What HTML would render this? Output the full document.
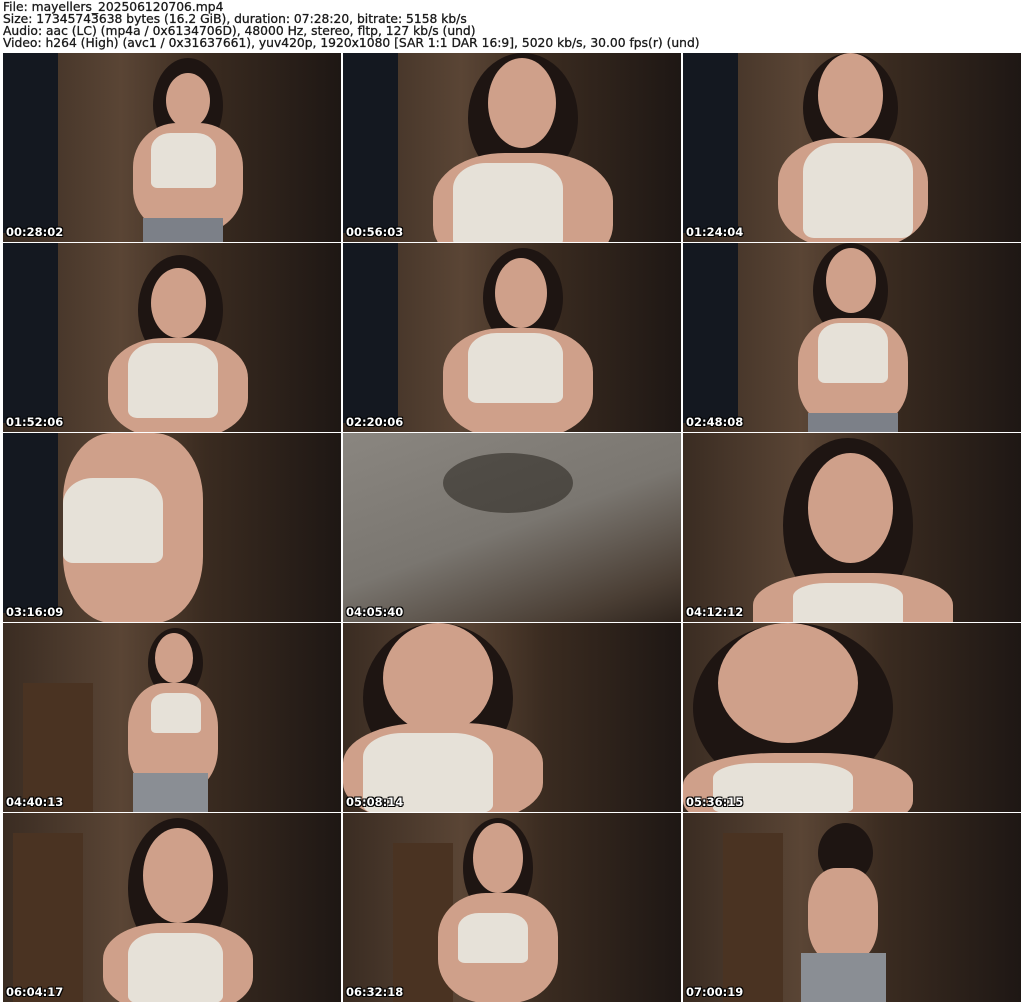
<!DOCTYPE html>
<html><head><meta charset="utf-8"><style>
*{margin:0;padding:0;box-sizing:border-box}
body{width:1024px;height:1003px;background:#fff;position:relative;overflow:hidden;font-family:"DejaVu Sans","Liberation Sans",sans-serif}
.hd{position:absolute;left:3px;top:1px;font-size:12.3px;line-height:12px;color:#1a1a1a;white-space:nowrap;-webkit-text-stroke:0.3px #1a1a1a}
.c{position:absolute;width:338px;height:189px;overflow:hidden;background:#2a211b}
.c div{position:absolute}
.t{left:3px;bottom:3px;color:#fff;font-weight:bold;font-size:11.5px;text-shadow:1px 1px 0 #000,-1px -1px 0 #000,1px -1px 0 #000,-1px 1px 0 #000;font-family:"DejaVu Sans",sans-serif}
.wall{left:0;top:0;width:100%;height:100%;background:linear-gradient(90deg,#3a2c22 0%,#5a4535 35%,#3a2b20 60%,#1e1714 100%)}
.lp{left:0;top:0;width:55px;height:180px;background:#141820}
.hair{border-radius:50%;background:#1e1512}
.skin{border-radius:50%;background:#cfa08a}
.top{background:#e6e1d8;border-radius:30% 30% 10% 10%}
</style></head><body>
<div class="hd">File: mayellers_202506120706.mp4<br>Size: 17345743638 bytes (16.2 GiB), duration: 07:28:20, bitrate: 5158 kb/s<br>Audio: aac (LC) (mp4a / 0x6134706D), 48000 Hz, stereo, fltp, 127 kb/s (und)<br>Video: h264 (High) (avc1 / 0x31637661), yuv420p, 1920x1080 [SAR 1:1 DAR 16:9], 5020 kb/s, 30.00 fps(r) (und)</div>

<div class="c" style="left:3px;top:53px"><div class="wall"></div><div class="lp"></div><div class="hair" style="left:150px;top:5px;width:70px;height:95px"></div><div class="skin" style="left:163px;top:20px;width:44px;height:55px"></div><div class="skin" style="left:130px;top:70px;width:110px;height:110px;border-radius:40%"></div><div class="top" style="left:148px;top:80px;width:65px;height:55px"></div><div style="left:140px;top:165px;width:80px;height:30px;background:#7c8088"></div><div class="t">00:28:02</div></div>
<div class="c" style="left:343px;top:53px"><div class="wall"></div><div class="lp"></div><div class="hair" style="left:125px;top:0;width:110px;height:130px"></div><div class="skin" style="left:145px;top:5px;width:68px;height:90px"></div><div class="skin" style="left:90px;top:100px;width:180px;height:120px;border-radius:40%"></div><div class="top" style="left:110px;top:110px;width:110px;height:85px"></div><div class="t">00:56:03</div></div>
<div class="c" style="left:683px;top:53px"><div class="wall"></div><div class="lp"></div><div class="hair" style="left:120px;top:0;width:95px;height:110px"></div><div class="skin" style="left:135px;top:0;width:65px;height:85px"></div><div class="skin" style="left:95px;top:85px;width:150px;height:110px;border-radius:40%"></div><div class="top" style="left:120px;top:90px;width:110px;height:95px"></div><div class="t">01:24:04</div></div>

<div class="c" style="left:3px;top:243px"><div class="wall"></div><div class="lp"></div><div class="hair" style="left:135px;top:12px;width:85px;height:110px"></div><div class="skin" style="left:148px;top:25px;width:55px;height:70px"></div><div class="skin" style="left:105px;top:95px;width:140px;height:100px;border-radius:40%"></div><div class="top" style="left:125px;top:100px;width:90px;height:75px"></div><div class="t">01:52:06</div></div>
<div class="c" style="left:343px;top:243px"><div class="wall"></div><div class="lp"></div><div class="hair" style="left:140px;top:5px;width:80px;height:100px"></div><div class="skin" style="left:152px;top:15px;width:52px;height:70px"></div><div class="skin" style="left:100px;top:85px;width:150px;height:110px;border-radius:40%"></div><div class="top" style="left:125px;top:90px;width:95px;height:70px"></div><div class="t">02:20:06</div></div>
<div class="c" style="left:683px;top:243px"><div class="wall"></div><div class="lp"></div><div class="hair" style="left:130px;top:0;width:75px;height:95px"></div><div class="skin" style="left:143px;top:5px;width:50px;height:65px"></div><div class="skin" style="left:115px;top:75px;width:110px;height:110px;border-radius:40%"></div><div class="top" style="left:135px;top:80px;width:70px;height:60px"></div><div style="left:125px;top:170px;width:90px;height:25px;background:#7c8088"></div><div class="t">02:48:08</div></div>

<div class="c" style="left:3px;top:433px"><div class="wall"></div><div class="lp"></div><div class="skin" style="left:60px;top:0;width:140px;height:190px;border-radius:35%"></div><div class="top" style="left:60px;top:45px;width:100px;height:85px"></div><div class="t">03:16:09</div></div>
<div class="c" style="left:343px;top:433px;background:#6e6a64"><div style="left:0;top:0;width:100%;height:100%;background:linear-gradient(160deg,#8a8680 0%,#7a7670 50%,#4a3e34 85%,#2e241d 100%)"></div><div style="left:100px;top:20px;width:130px;height:60px;border-radius:50%;background:rgba(30,25,20,.5)"></div><div class="t">04:05:40</div></div>
<div class="c" style="left:683px;top:433px"><div class="wall"></div><div class="hair" style="left:100px;top:5px;width:130px;height:175px"></div><div class="skin" style="left:125px;top:20px;width:85px;height:110px"></div><div class="skin" style="left:70px;top:140px;width:200px;height:80px;border-radius:40%"></div><div class="top" style="left:110px;top:150px;width:110px;height:45px"></div><div class="t">04:12:12</div></div>

<div class="c" style="left:3px;top:623px"><div class="wall"></div><div style="left:20px;top:60px;width:70px;height:129px;background:#4a3322"></div><div class="hair" style="left:145px;top:5px;width:55px;height:70px"></div><div class="skin" style="left:152px;top:10px;width:38px;height:50px"></div><div class="skin" style="left:125px;top:60px;width:90px;height:110px;border-radius:40%"></div><div class="top" style="left:148px;top:70px;width:50px;height:40px"></div><div style="left:130px;top:150px;width:75px;height:40px;background:#8a8e94"></div><div class="t">04:40:13</div></div>
<div class="c" style="left:343px;top:623px"><div class="wall"></div><div class="hair" style="left:20px;top:0;width:150px;height:150px"></div><div class="skin" style="left:40px;top:0;width:110px;height:110px"></div><div class="skin" style="left:0;top:100px;width:200px;height:100px;border-radius:40%"></div><div class="top" style="left:20px;top:110px;width:130px;height:80px"></div><div class="t">05:08:14</div></div>
<div class="c" style="left:683px;top:623px"><div class="wall"></div><div class="hair" style="left:10px;top:0;width:200px;height:170px"></div><div class="skin" style="left:35px;top:0;width:140px;height:120px"></div><div class="skin" style="left:0;top:130px;width:230px;height:80px;border-radius:40%"></div><div class="top" style="left:30px;top:140px;width:140px;height:50px"></div><div class="t">05:36:15</div></div>

<div class="c" style="left:3px;top:813px"><div class="wall"></div><div style="left:10px;top:20px;width:70px;height:169px;background:#4a3322"></div><div class="hair" style="left:125px;top:5px;width:100px;height:140px"></div><div class="skin" style="left:140px;top:15px;width:70px;height:95px"></div><div class="skin" style="left:100px;top:110px;width:150px;height:90px;border-radius:40%"></div><div class="top" style="left:125px;top:120px;width:95px;height:70px"></div><div class="t">06:04:17</div></div>
<div class="c" style="left:343px;top:813px"><div class="wall"></div><div style="left:50px;top:30px;width:60px;height:159px;background:#4a3322"></div><div class="hair" style="left:120px;top:5px;width:70px;height:100px"></div><div class="skin" style="left:130px;top:10px;width:50px;height:70px"></div><div class="skin" style="left:95px;top:80px;width:120px;height:110px;border-radius:40%"></div><div class="top" style="left:115px;top:100px;width:70px;height:50px"></div><div class="t">06:32:18</div></div>
<div class="c" style="left:683px;top:813px"><div class="wall"></div><div style="left:40px;top:20px;width:60px;height:169px;background:#4a3322"></div><div class="hair" style="left:135px;top:10px;width:55px;height:60px"></div><div class="skin" style="left:125px;top:55px;width:70px;height:95px;border-radius:40%"></div><div style="left:118px;top:140px;width:85px;height:49px;background:#8a8e94"></div><div class="t">07:00:19</div></div>
</body></html>
